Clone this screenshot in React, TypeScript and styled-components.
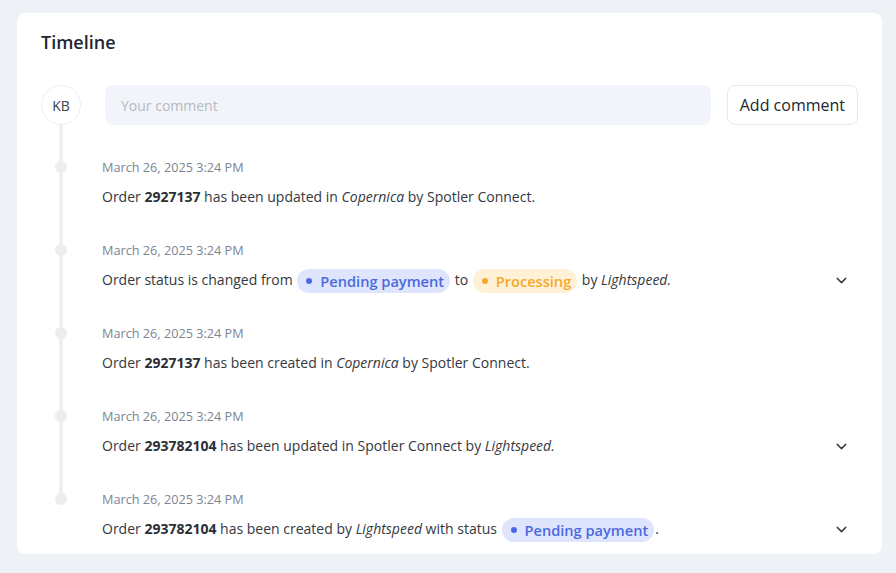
import styled, { createGlobalStyle } from 'styled-components';
import { FiChevronDown } from 'react-icons/fi';

const GlobalStyle = createGlobalStyle`
  body {
    margin: 0;
    background-color: #eef1f5;
    font-family: 'Open Sans', 'Liberation Sans', sans-serif;
  }
`;

const Page = styled.div`
  padding: 13px 14px 20px 17px;
`;

const Card = styled.div`
  background-color: #ffffff;
  border-radius: 8px;
  padding: 17px 24px 11px 24px;
`;

const Title = styled.h2`
  margin: 0;
  font-size: 18px;
  font-weight: 600;
  line-height: 24px;
  color: #1f2535;
`;

const List = styled.div`
  position: relative;
  margin-top: 31px;
  &::before {
    content: '';
    position: absolute;
    left: 18px;
    top: 40px;
    bottom: 45px;
    width: 4px;
    background-color: #eef0f3;
  }
`;

const CommentRow = styled.div`
  display: flex;
  align-items: center;
  gap: 16px;
  padding-bottom: 3px;
`;

const Avatar = styled.div`
  position: relative;
  z-index: 1;
  width: 38px;
  height: 38px;
  flex: 0 0 38px;
  border: 1px solid #eceef2;
  border-radius: 50%;
  background-color: #fff;
  display: flex;
  align-items: center;
  justify-content: center;
  font-size: 14px;
  color: #3a3f4a;
  margin-right: 8px;
`;

const Input = styled.input`
  flex: 1;
  height: 40px;
  box-sizing: border-box;
  border: none;
  border-radius: 8px;
  background-color: #f1f4f8;
  padding: 0 16px;
  font-family: inherit;
  font-size: 14px;
  color: #333;
  outline: none;
  &::placeholder {
    color: #b4bac5;
  }
`;

const AddButton = styled.button`
  height: 40px;
  padding: 0 12px;
  border: 1px solid #e6e9ee;
  border-radius: 8px;
  background-color: #fff;
  font-family: inherit;
  font-size: 16px;
  color: #22262e;
  cursor: pointer;
`;

const Item = styled.div`
  display: flex;
  align-items: flex-start;
  margin-top: 30px;
`;

const DotCol = styled.div`
  position: relative;
  z-index: 1;
  width: 40px;
  flex: 0 0 40px;
  height: 18px;
  display: flex;
  align-items: center;
  justify-content: center;
  margin-right: 21px;
`;

const Dot = styled.span`
  width: 12px;
  height: 12px;
  border-radius: 50%;
  background-color: #ebedf1;
`;

const Content = styled.div`
  flex: 1;
`;

const Date = styled.div`
  font-size: 12.7px;
  line-height: 18px;
  color: #7b8594;
`;

const Line = styled.div`
  display: flex;
  align-items: center;
  margin-top: 7px;
  min-height: 28px;
`;

const Text = styled.div`
  flex: 1;
  font-size: 14px;
  line-height: 28px;
  color: #343840;
  b {
    font-weight: 700;
    color: #2b2e35;
  }
`;

const Pill = styled.span<{ $tone: 'blue' | 'orange' }>`
  display: inline-flex;
  align-items: center;
  gap: 8px;
  height: 24px;
  padding: 0 6px 0 9px;
  margin: 0 1px;
  border-radius: 12px;
  vertical-align: middle;
  font-size: 14.6px;
  font-weight: 600;
  line-height: 24px;
  background-color: ${(p) => (p.$tone === 'blue' ? '#dee5fc' : '#fff1d6')};
  color: ${(p) => (p.$tone === 'blue' ? '#4b6ae0' : '#f6a72b')};
  &::before {
    content: '';
    width: 6px;
    height: 6px;
    border-radius: 50%;
    background-color: currentColor;
  }
`;

const Toggle = styled.button`
  border: none;
  background: none;
  padding: 0;
  width: 24px;
  height: 24px;
  margin-right: 5px;
  display: flex;
  align-items: center;
  justify-content: center;
  color: #3a3e46;
  font-size: 17px;
  cursor: pointer;
`;

type Entry = {
  text: React.ReactNode;
  expandable?: boolean;
};

const entries: Entry[] = [
  {
    text: (
      <>
        Order <b>2927137</b> has been updated in <i>Copernica</i> by Spotler Connect.
      </>
    ),
  },
  {
    text: (
      <>
        Order status is changed from <Pill $tone="blue">Pending payment</Pill> to{' '}
        <Pill $tone="orange">Processing</Pill> by <i>Lightspeed.</i>
      </>
    ),
    expandable: true,
  },
  {
    text: (
      <>
        Order <b>2927137</b> has been created in <i>Copernica</i> by Spotler Connect.
      </>
    ),
  },
  {
    text: (
      <>
        Order <b>293782104</b> has been updated in Spotler Connect by <i>Lightspeed.</i>
      </>
    ),
    expandable: true,
  },
  {
    text: (
      <>
        Order <b>293782104</b> has been created by <i>Lightspeed</i> with status{' '}
        <Pill $tone="blue">Pending payment</Pill>.
      </>
    ),
    expandable: true,
  },
];

function App() {
  return (
    <>
      <GlobalStyle />
      <Page>
        <Card>
          <Title>Timeline</Title>
          <List>
            <CommentRow>
              <Avatar>KB</Avatar>
              <Input placeholder="Your comment" />
              <AddButton>Add comment</AddButton>
            </CommentRow>
            {entries.map((entry, i) => (
              <Item key={i}>
                <DotCol>
                  <Dot />
                </DotCol>
                <Content>
                  <Date>March 26, 2025 3:24 PM</Date>
                  <Line>
                    <Text>{entry.text}</Text>
                    {entry.expandable ? (
                      <Toggle>
                        <FiChevronDown />
                      </Toggle>
                    ) : null}
                  </Line>
                </Content>
              </Item>
            ))}
          </List>
        </Card>
      </Page>
    </>
  );
}

export default App;
